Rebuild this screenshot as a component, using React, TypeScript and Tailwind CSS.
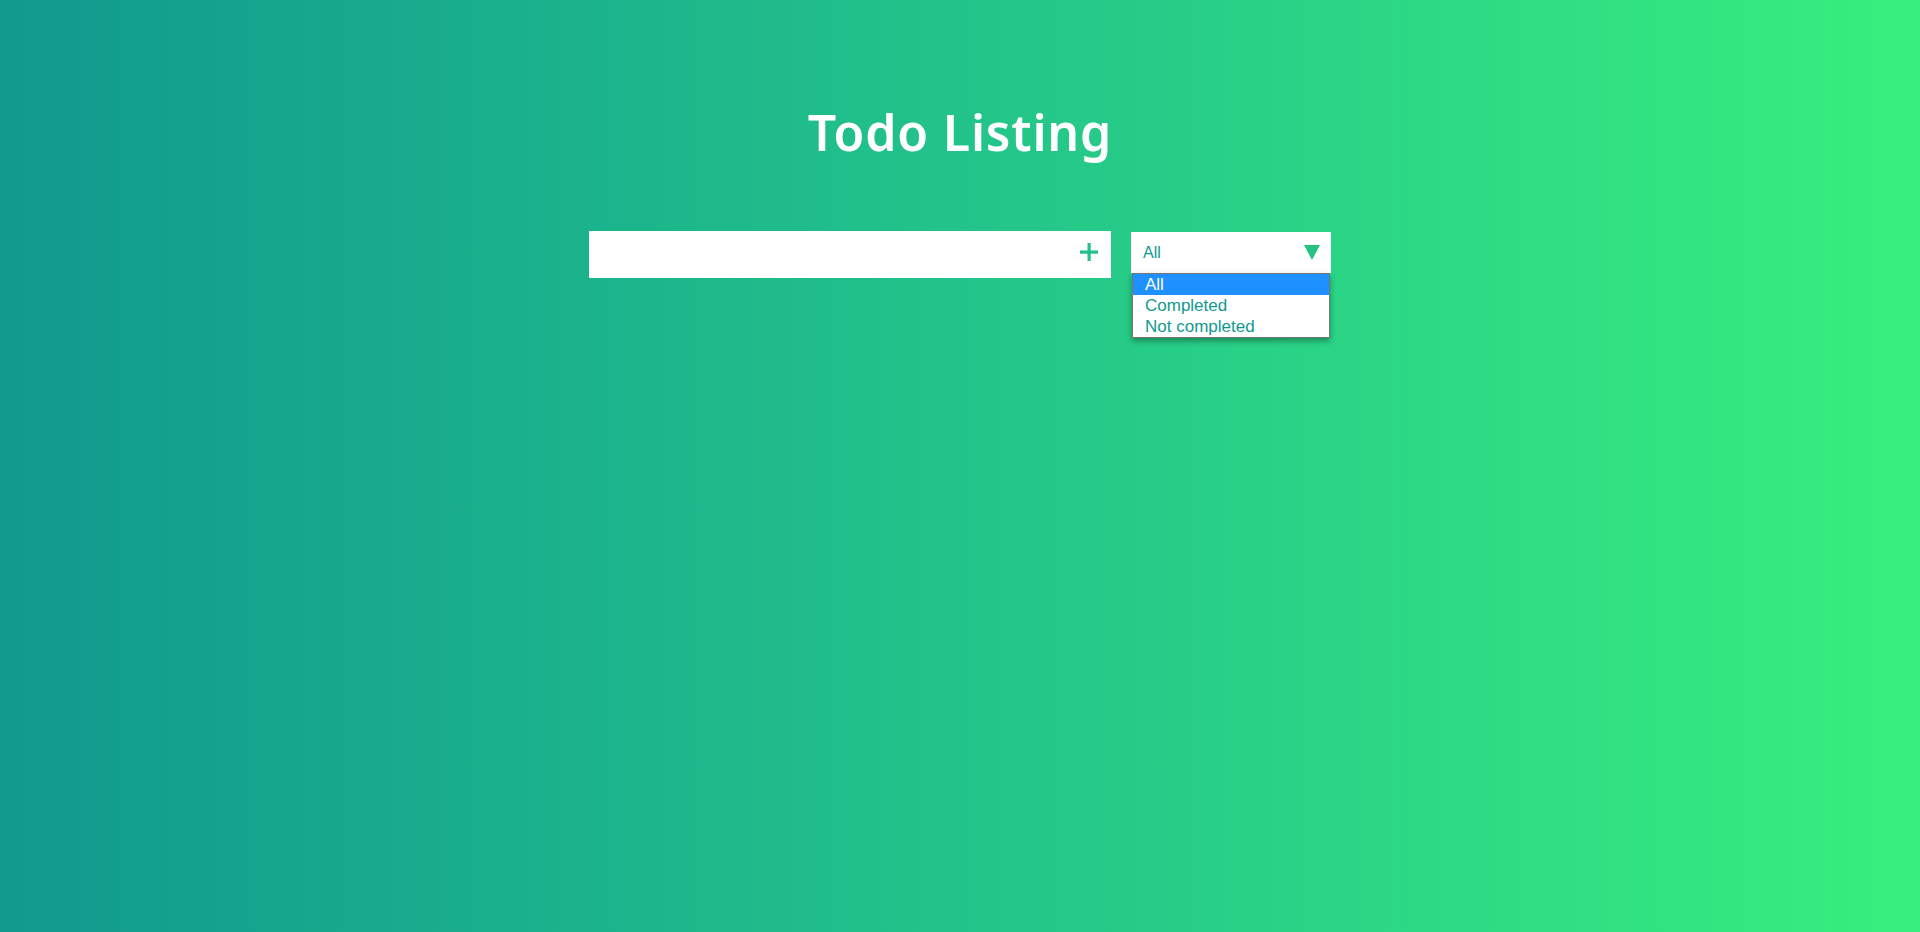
import React, { useState } from 'react';

const options = ['All', 'Completed', 'Not completed'];

export default function App() {
  const [todo, setTodo] = useState('');
  const [filter, setFilter] = useState('All');

  return (
    <div className="min-h-screen w-full bg-gradient-to-r from-[#11998e] to-[#38ef7d] font-['Liberation_Sans',Arial,sans-serif]">
      <header className="pt-[107px] text-center">
        <h1 className="text-[50px] leading-none font-semibold tracking-[0.8px] text-white font-['Noto_Sans',sans-serif]">
          Todo Listing
        </h1>
      </header>

      <form
        className="mt-[74px] flex justify-center items-start gap-5"
        onSubmit={(e) => e.preventDefault()}
      >
        <div className="flex items-center bg-white w-[522px] h-[47px]">
          <input
            type="text"
            value={todo}
            onChange={(e) => setTodo(e.target.value)}
            className="flex-1 h-full px-4 text-lg text-[#11998e] outline-none bg-transparent"
          />
          <button type="submit" className="w-[44px] h-full flex items-center justify-center pb-[5px] text-[#22c08a]">
            <svg width="18" height="18" viewBox="0 0 18 18">
              <rect x="7.5" y="0" width="3.2" height="18" fill="currentColor" />
              <rect x="0" y="7.5" width="18" height="3.2" fill="currentColor" />
            </svg>
          </button>
        </div>

        <div className="relative w-[200px] mt-px">
          <div className="h-[41px] bg-white flex items-center justify-between pl-3 pr-[11px] text-base text-[#11998e] cursor-pointer">
            <span>{filter}</span>
            <svg width="16" height="15" viewBox="0 0 16 15" className="text-[#25c283]">
              <polygon points="0,0 16,0 8,15" fill="currentColor" />
            </svg>
          </div>
          <ul className="absolute left-px right-px top-[41px] bg-white border border-[#767676] shadow-[0_3px_6px_rgba(0,0,0,0.35)]">
            {options.map((opt) => (
              <li
                key={opt}
                onClick={() => setFilter(opt)}
                className={
                  opt === filter
                    ? 'h-[21px] leading-[21px] px-3 text-[17px] bg-[#1e90ff] text-white cursor-default'
                    : 'h-[21px] leading-[21px] px-3 text-[17px] text-[#11998e] cursor-default'
                }
              >
                {opt}
              </li>
            ))}
          </ul>
        </div>
      </form>
    </div>
  );
}
